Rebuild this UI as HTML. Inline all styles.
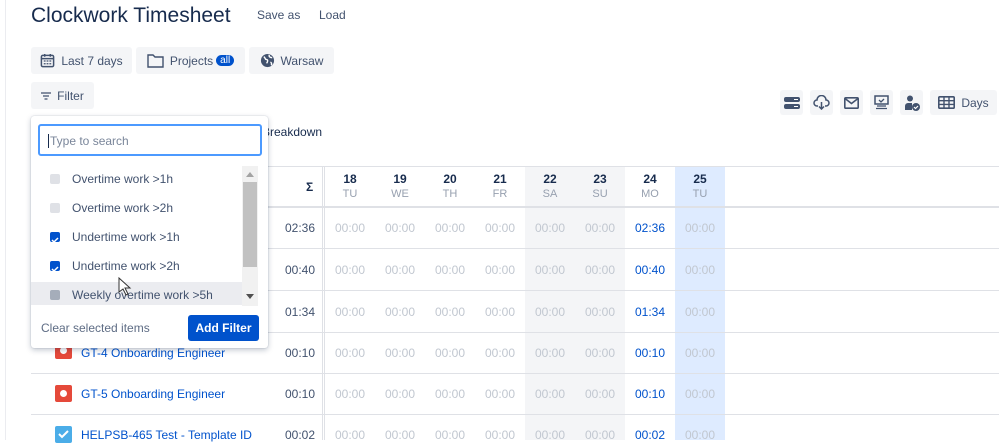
<!DOCTYPE html>
<html><head><style>
*{margin:0;padding:0;box-sizing:border-box}
body{width:999px;height:440px;overflow:hidden;background:#fff;font-family:"Liberation Sans",sans-serif;color:#172b4d;position:relative}
.a{position:absolute}
.btn{position:absolute;background:#f4f5f7;border-radius:3px;font-size:12px;color:#42526e;display:flex;align-items:center;justify-content:center;gap:6px}
.hl{position:absolute;height:1px;background:#dfe1e6}
.vl{position:absolute;width:1px;background:#dfe1e6}
.c{position:absolute;width:50px;text-align:center;font-size:12px;color:#c1c7d0}
.s{position:absolute;width:60px;text-align:right;font-size:12px;color:#42526e;left:255px}
.lk{position:absolute;left:81px;font-size:12px;color:#0052cc}
.ic{position:absolute;width:23px;height:25px;background:#f4f5f7;border-radius:3px;top:90px;display:flex;align-items:center;justify-content:center}
</style></head><body>
<div class="vl" style="left:5px;top:0;height:440px;background:#ebecf0"></div>
<div class="a" style="left:31px;top:4px;font-size:21px;color:#172b4d">Clockwork Timesheet</div>
<div class="a" style="left:257px;top:8px;font-size:12px;color:#42526e">Save as</div>
<div class="a" style="left:319px;top:8px;font-size:12px;color:#42526e">Load</div>

<div class="btn" style="left:31px;top:47px;width:101px;height:27px"><svg width="15" height="15" viewBox="0 0 16 16"><rect x="1.5" y="2.5" width="13" height="12" rx="1.5" fill="none" stroke="#42526e" stroke-width="1.6"/><path d="M1.5 6h13M5 1v3M11 1v3" stroke="#42526e" stroke-width="1.6"/><path d="M4 8.5h2M7 8.5h2M10 8.5h2M4 11.5h2M7 11.5h2M10 11.5h2" stroke="#42526e" stroke-width="1.3"/></svg>Last 7 days</div>
<div class="btn" style="left:136px;top:47px;width:109px;height:27px"><svg width="17" height="15" viewBox="0 0 17 15"><path d="M1 2h5l2 2h8v10H1z" fill="none" stroke="#42526e" stroke-width="1.4"/></svg>Projects<span style="background:#0052cc;color:#fff;border-radius:8px;font-size:10px;padding:0 4px;margin-left:-3px">all</span></div>
<div class="btn" style="left:249px;top:47px;width:85px;height:27px"><svg width="15" height="15" viewBox="0 0 16 16"><circle cx="8" cy="8" r="7" fill="#42526e"/><path d="M4 4c2 1 1 3 3 3s1 3 0 4M10 2c-1 2 1 3 3 3M11 10c1 0 2 1 1 3" stroke="#fff" stroke-width="1.5" fill="none"/></svg>Warsaw</div>
<div class="btn" style="left:31px;top:82px;width:63px;height:27px"><svg width="10" height="8" viewBox="0 0 10 8"><path d="M0 1h10M2 4h6M3.5 7h3" stroke="#42526e" stroke-width="1.2"/></svg>Filter</div>

<div class="ic" style="left:780px"><svg width="16" height="12"><rect x="0" y="0" width="16" height="5" rx="2" fill="#42526e"/><rect x="0" y="7" width="16" height="5" rx="2" fill="#42526e"/><path d="M10 2.5h4M10 9.5h4" stroke="#fff"/></svg></div>
<div class="ic" style="left:810px"><svg width="17" height="15" viewBox="0 0 17 15"><path d="M5 11H4a3 3 0 0 1 0-6 4.5 4.5 0 0 1 9 0 3 3 0 0 1 0 6h-1" fill="none" stroke="#42526e" stroke-width="1.5"/><path d="M8.5 7v7M6 11.5l2.5 2.5 2.5-2.5" fill="none" stroke="#42526e" stroke-width="1.5"/></svg></div>
<div class="ic" style="left:840px"><svg width="15" height="12"><rect x=".8" y=".8" width="13.4" height="10.4" rx="1" fill="none" stroke="#42526e" stroke-width="1.6"/><path d="M1 1.5l6.5 5 6.5-5" fill="none" stroke="#42526e" stroke-width="1.6"/></svg></div>
<div class="ic" style="left:870px"><svg width="15" height="15"><rect x="1" y="1" width="13" height="8" fill="none" stroke="#42526e" stroke-width="1.5"/><path d="M5 5l2 2 3-3M3 11h9M2 13.5h11" stroke="#42526e" stroke-width="1.3" fill="none"/></svg></div>
<div class="ic" style="left:900px"><svg width="16" height="16"><circle cx="6" cy="3.5" r="3" fill="#42526e"/><path d="M1 15v-4a3 3 0 0 1 3-3h4v7z" fill="#42526e"/><circle cx="12" cy="12" r="4" fill="#42526e"/><path d="M10 12l1.5 1.5 2.5-2.5" stroke="#fff" fill="none" stroke-width="1.2"/></svg></div>
<div class="btn" style="left:930px;top:90px;width:67px;height:25px"><svg width="17" height="13"><rect x=".8" y=".8" width="15.4" height="11.4" rx="1" fill="none" stroke="#42526e" stroke-width="1.6"/><path d="M1 4.7h15M1 8.4h15M6 1v11M11 1v11" stroke="#42526e" stroke-width="1.4"/></svg>Days</div>

<div class="a" style="left:262px;top:125px;font-size:12px;color:#172b4d">Breakdown</div>

<!-- table -->
<div class="a" style="left:525px;top:166px;width:100px;height:274px;background:#f4f5f7"></div>
<div class="a" style="left:675px;top:166px;width:50px;height:274px;background:#deebff"></div>
<div class="hl" style="left:31px;top:166px;width:968px"></div>
<div class="hl" style="left:31px;top:206px;width:968px;height:2px"></div>
<div class="hl" style="left:31px;top:248px;width:968px"></div>
<div class="hl" style="left:31px;top:290px;width:968px"></div>
<div class="hl" style="left:31px;top:332px;width:968px"></div>
<div class="hl" style="left:31px;top:373px;width:968px"></div>
<div class="hl" style="left:31px;top:414px;width:968px"></div>
<div class="vl" style="left:322px;top:166px;height:274px"></div>
<div class="vl" style="left:324px;top:166px;height:274px"></div>
<div class="a" style="left:306px;top:180px;font-size:12px;font-weight:bold">Σ</div>

<div id="hdr"></div>
<script>
var d=[["18","TU"],["19","WE"],["20","TH"],["21","FR"],["22","SA"],["23","SU"],["24","MO"],["25","TU"]];
var h="";
d.forEach(function(x,i){var l=325+i*50;
h+='<div class="c" style="left:'+l+'px;top:172px;color:#172b4d;font-weight:bold">'+x[0]+'</div><div class="c" style="left:'+l+'px;top:188px;color:#97a0af;font-size:11px">'+x[1]+'</div>';});
var rows=[["02:36",1],["00:40",1],["01:34",1],["00:10",1],["00:10",1],["00:02",1]];
var ys=[221,263,305,346,387,428];
rows.forEach(function(r,j){h+='<div class="s" style="top:'+ys[j]+'px">'+r[0]+'</div>';
for(var i=0;i<8;i++){var v=i==6?r[0]:"00:00";h+='<div class="c" style="left:'+(325+i*50)+'px;top:'+ys[j]+'px;'+(i==6?'color:#0052cc':'')+'">'+v+'</div>';}});
document.getElementById("hdr").innerHTML=h;
</script>
<div class="a" style="left:55px;top:342px;width:17px;height:17px;background:#e5493a;border-radius:2px"><div class="a" style="left:5px;top:5px;width:7px;height:7px;border-radius:50%;background:#fff"></div></div>
<div class="lk" style="top:346px">GT-4 Onboarding Engineer</div>
<div class="a" style="left:55px;top:385px;width:17px;height:17px;background:#e5493a;border-radius:2px"><div class="a" style="left:5px;top:5px;width:7px;height:7px;border-radius:50%;background:#fff"></div></div>
<div class="lk" style="top:387px">GT-5 Onboarding Engineer</div>
<div class="a" style="left:55px;top:426px;width:17px;height:17px;background:#4bade8;border-radius:2px"><svg width="17" height="14"><path d="M4 8l3 3 6-6" stroke="#fff" stroke-width="2" fill="none"/></svg></div>
<div class="lk" style="top:428px">HELPSB-465 Test - Template ID</div>

<!-- dropdown -->
<div class="a" style="left:31px;top:116px;width:237px;height:232px;background:#fff;border-radius:3px;box-shadow:0 2px 6px rgba(9,30,66,.25),0 0 1px rgba(9,30,66,.3)">
<div class="a" style="left:7px;top:8px;width:224px;height:32px;border:2px solid #4c9aff;border-radius:3px;font-size:12px;color:#7a869a;padding:8px 0 0 8px"><span style="border-left:1px solid #172b4d;padding-left:1px">Type to search</span></div>
<div class="a" style="left:0;top:166px;width:211px;height:23px;background:#ebecf0"></div>
<div class="a" style="left:211px;top:50px;width:16px;height:140px;background:#f1f1f1"></div>
<div class="a" style="left:212px;top:66px;width:14px;height:85px;background:#c1c1c1"></div>
<div class="a" style="left:215px;top:56px;border:4px solid transparent;border-bottom:5px solid #a3a3a3;border-top:0"></div>
<div class="a" style="left:215px;top:178px;border:4px solid transparent;border-top:5px solid #505050;border-bottom:0"></div>
<div class="a" style="left:19px;top:58px;width:10px;height:10px;background:#dfe1e6;border-radius:2px"></div>
<div class="a" style="left:41px;top:56px;font-size:12px;color:#42526e">Overtime work &gt;1h</div>
<div class="a" style="left:19px;top:87px;width:10px;height:10px;background:#dfe1e6;border-radius:2px"></div>
<div class="a" style="left:41px;top:85px;font-size:12px;color:#42526e">Overtime work &gt;2h</div>
<div class="a" style="left:19px;top:116px;width:10px;height:10px;background:#0052cc;border-radius:2px"><svg width="10" height="10"><path d="M2 5l2 2 4-4" stroke="#fff" stroke-width="1.5" fill="none"/></svg></div>
<div class="a" style="left:41px;top:114px;font-size:12px;color:#42526e">Undertime work &gt;1h</div>
<div class="a" style="left:19px;top:145px;width:10px;height:10px;background:#0052cc;border-radius:2px"><svg width="10" height="10"><path d="M2 5l2 2 4-4" stroke="#fff" stroke-width="1.5" fill="none"/></svg></div>
<div class="a" style="left:41px;top:143px;font-size:12px;color:#42526e">Undertime work &gt;2h</div>
<div class="a" style="left:19px;top:174px;width:10px;height:10px;background:#a5adba;border-radius:2px"></div>
<div class="a" style="left:41px;top:172px;font-size:12px;color:#42526e">Weekly overtime work &gt;5h</div>
<div class="a" style="left:10px;top:205px;font-size:12px;color:#5e6c84">Clear selected items</div>
<div class="a" style="left:157px;top:199px;width:71px;height:26px;background:#0052cc;border-radius:3px;color:#fff;font-size:12px;font-weight:bold;text-align:center;line-height:26px">Add Filter</div>
</div>
<svg class="a" style="left:118px;top:277px" width="14" height="20"><path d="M1 1v14l4-3 3 6 2-1-3-6h5z" fill="#fff" stroke="#333" stroke-width="1"/></svg>
</body></html>
